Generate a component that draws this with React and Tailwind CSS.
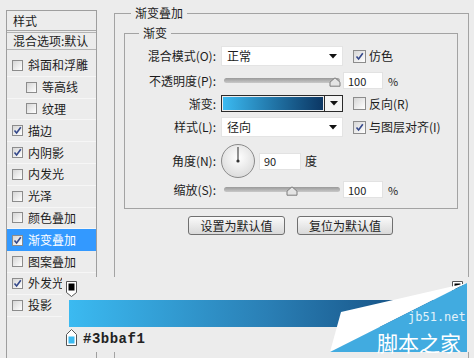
import React from "react";

const styles = [
  { name: "斜面和浮雕" },
  { name: "等高线", sub: true },
  { name: "纹理", sub: true },
  { name: "描边", on: true },
  { name: "内阴影", on: true },
  { name: "内发光" },
  { name: "光泽" },
  { name: "颜色叠加" },
  { name: "渐变叠加", on: true, active: true },
  { name: "图案叠加" },
  { name: "外发光", on: true },
  { name: "投影" },
];

function Check({ on, size = 11 }) {
  return (
    <span
      className={
        size === 11
          ? "w-[11px] h-[11px] shrink-0 border border-[#8c8c8c] bg-gradient-to-br from-[#d6d6d6] to-white flex items-center justify-center"
          : "w-[13px] h-[13px] shrink-0 border border-[#8c8c8c] bg-gradient-to-br from-[#d6d6d6] to-white flex items-center justify-center"
      }
    >
      {on && (
        <svg width="9" height="9" viewBox="0 0 9 9">
          <path d="M1.5 4.5 L3.6 7 L7.8 1.2" fill="none" stroke="#34488a" strokeWidth="1.6" />
        </svg>
      )}
    </span>
  );
}

function Arrow() {
  return (
    <svg width="8" height="5" viewBox="0 0 8 5">
      <path d="M0 0 H8 L4 4.5 Z" fill="#111" />
    </svg>
  );
}

function Slider({ at }) {
  return (
    <div className="relative w-[116px] h-[17px] ml-[8px] shrink-0">
      <div className="absolute left-0 right-0 top-[6px] h-[5px] rounded-full bg-gradient-to-b from-[#9a9a9a] to-[#c9c9c9]" />
      <svg
        className="absolute top-[5px]"
        style={{ left: at - 6 }}
        width="12"
        height="10"
        viewBox="0 0 12 10"
      >
        <path d="M1 9.2 V5.2 L6 0.8 L11 5.2 V9.2 Z" fill="#e4e4e4" stroke="#7c7c7c" strokeLinejoin="round" />
      </svg>
    </div>
  );
}

function Field({ value, w = "w-[40px]" }) {
  return (
    <div className={`${w} h-[17px] bg-white border border-[#e2e2e2] pl-[4px] flex items-center text-[11px] shrink-0`}>
      {value}
    </div>
  );
}

function Select({ value }) {
  return (
    <div className="ml-[5px] w-[122px] h-[20px] bg-white border border-[#e4e4e4] flex items-center justify-between pl-[5px] pr-[5px] shrink-0">
      <span>{value}</span>
      <Arrow />
    </div>
  );
}

function Label({ children }) {
  return <div className="w-[91px] text-right shrink-0">{children}</div>;
}

export default function App() {
  return (
    <div className="relative flex w-[474px] h-[358px] overflow-hidden bg-[#ececec] text-[12px] leading-[14px] text-[#1c1c1c] font-['Noto_Sans_CJK_SC',sans-serif]">
      {/* layer style list */}
      <div className="ml-[6px] mt-[10px] w-[91px] h-[400px] shrink-0 border border-[#9e9e9e]">
        <div className="h-[20px] pl-[6px] flex items-center border-b border-[#a8a8a8]">样式</div>
        <div className="mt-[1px] h-[18px] pl-[6px] flex items-center border-y border-[#b4b4b4] whitespace-nowrap">
          混合选项:默认
        </div>
        <div className="mt-[5px]">
          {styles.map((s) => (
            <div
              key={s.name}
              className={
                s.active
                  ? "h-[21.8px] flex items-center pl-[5px] bg-[#3399ff] text-white"
                  : s.sub
                  ? "h-[21.8px] flex items-center pl-[19px] border-b border-[#f6f6f6]"
                  : "h-[21.8px] flex items-center pl-[5px] border-b border-[#f6f6f6]"
              }
            >
              <Check on={s.on} />
              <span className="ml-[5px] whitespace-nowrap">{s.name}</span>
            </div>
          ))}
        </div>
      </div>

      {/* gradient overlay dialog */}
      <div className="ml-[17px] w-[355px] shrink-0">
        <fieldset className="mt-[6px] h-[420px] border border-[#a3a3a3] pl-[9px] pr-[10px]">
          <legend className="ml-[7px] px-[4px] leading-[14px]">渐变叠加</legend>
          <fieldset className="mt-[6px] border border-[#a3a3a3] pb-[10px]">
            <legend className="ml-[14px] px-[4px] leading-[14px]">渐变</legend>

            <div className="mt-[6px] h-[20px] flex items-center">
              <Label>混合模式(O):</Label>
              <Select value="正常" />
              <div className="ml-[10px] flex items-center">
                <Check on size={13} />
                <span className="ml-[3px]">仿色</span>
              </div>
            </div>

            <div className="mt-[6px] h-[17px] flex items-center">
              <Label>不透明度(P):</Label>
              <Slider at={111} />
              <div className="ml-[3px] flex items-center">
                <Field value="100" />
                <span className="ml-[5px] text-[11px]">%</span>
              </div>
            </div>

            <div className="mt-[6px] h-[17px] flex items-center">
              <Label>渐变:</Label>
              <div className="ml-[5px] w-[104px] h-[17px] border border-[#2a2a2a] p-[1px] shrink-0">
                <div className="w-full h-full bg-gradient-to-r from-[#3bbaf1] to-[#0c3764]" />
              </div>
              <div className="w-[18px] h-[17px] border-y border-r border-[#2a2a2a] bg-[#f4f4f4] flex items-center justify-center shrink-0">
                <Arrow />
              </div>
              <div className="ml-[10px] flex items-center">
                <Check size={13} />
                <span className="ml-[3px]">反向(R)</span>
              </div>
            </div>

            <div className="mt-[5px] h-[20px] flex items-center">
              <Label>样式(L):</Label>
              <Select value="径向" />
              <div className="ml-[10px] flex items-center">
                <Check on size={13} />
                <span className="ml-[3px]">与图层对齐(I)</span>
              </div>
            </div>

            <div className="mt-[7px] h-[34px] flex items-center">
              <Label>角度(N):</Label>
              <svg className="ml-[4px] shrink-0" width="36" height="36" viewBox="0 0 36 36">
                <defs>
                  <radialGradient id="dial" cx="50%" cy="40%" r="60%">
                    <stop offset="0%" stopColor="#ffffff" />
                    <stop offset="100%" stopColor="#dcdcdc" />
                  </radialGradient>
                </defs>
                <circle cx="18" cy="18" r="16.5" fill="url(#dial)" stroke="#8a8a8a" />
                <line x1="18" y1="18" x2="18" y2="4" stroke="#4a4a4a" strokeWidth="1.2" />
                <circle cx="18" cy="18" r="1.6" fill="#333" />
              </svg>
              <div className="ml-[3px]">
                <Field value="90" w="w-[42px]" />
              </div>
              <span className="ml-[4px]">度</span>
            </div>

            <div className="mt-[3px] h-[17px] flex items-center">
              <Label>缩放(S):</Label>
              <Slider at={68} />
              <div className="ml-[3px] flex items-center">
                <Field value="100" />
                <span className="ml-[5px] text-[11px]">%</span>
              </div>
            </div>
          </fieldset>

          <div className="mt-[7px] flex">
            <button className="ml-[64px] w-[97px] h-[19px] rounded-[3px] border border-[#707070] bg-gradient-to-b from-[#fafafa] to-[#d9d9d9]">
              设置为默认值
            </button>
            <button className="ml-[12px] w-[96px] h-[19px] rounded-[3px] border border-[#707070] bg-gradient-to-b from-[#fafafa] to-[#d9d9d9]">
              复位为默认值
            </button>
          </div>
        </fieldset>
      </div>

      {/* zoomed gradient editor strip */}
      <div className="absolute left-[62px] top-[277px] w-[412px] h-[75px] bg-[#ececec]">
        <div className="h-[20px] pl-[4px] pr-[11px] flex items-end justify-between">
          <svg width="11" height="16" viewBox="0 0 11 16">
            <path d="M0.5 0.5 H10.5 V11.5 L5.5 15.5 L0.5 11.5 Z" fill="#fff" stroke="#555" />
            <rect x="2.5" y="2.5" width="6" height="7" fill="#000" />
          </svg>
          <svg width="11" height="16" viewBox="0 0 11 16">
            <path d="M0.5 0.5 H10.5 V11.5 L5.5 15.5 L0.5 11.5 Z" fill="#fff" stroke="#555" />
            <rect x="2.5" y="2.5" width="6" height="7" fill="#000" />
          </svg>
        </div>
        <div className="mt-[3px] ml-[7px] w-[398px] h-[27px] bg-gradient-to-r from-[#3bbaf1] via-[#2a7fb5] to-[#0f3f70]" />
        <div className="mt-[2px] pl-[4px] flex items-center">
          <svg width="11" height="17" viewBox="0 0 11 17">
            <path d="M0.5 16.5 H10.5 V5.5 L5.5 0.5 L0.5 5.5 Z" fill="#fff" stroke="#555" />
            <rect x="2.5" y="7.5" width="6" height="7" fill="#3bbaf1" />
          </svg>
          <span className="ml-[6px] mt-[2px] font-['Liberation_Mono',monospace] font-bold text-[14px] tracking-[0.5px] text-[#222]">
            #3bbaf1
          </span>
        </div>
      </div>

      {/* watermark */}
      <svg className="absolute left-[328px] top-[280px]" width="146" height="78" viewBox="0 0 146 78">
        <polygon points="13,32 139,3 2,72" fill="#ffffff" />
        <polygon points="2,72 139,3 139,72" fill="#41abe0" />
      </svg>
      <span className="absolute left-[408px] top-[311px] font-['DejaVu_Sans_Mono',monospace] text-[12px] leading-[13px] text-[#e2f2fa]">
        jb51.net
      </span>
      <span className="absolute left-[377px] top-[331px] text-[21px] leading-[22px] text-white whitespace-nowrap">
        脚本之家
      </span>
    </div>
  );
}
